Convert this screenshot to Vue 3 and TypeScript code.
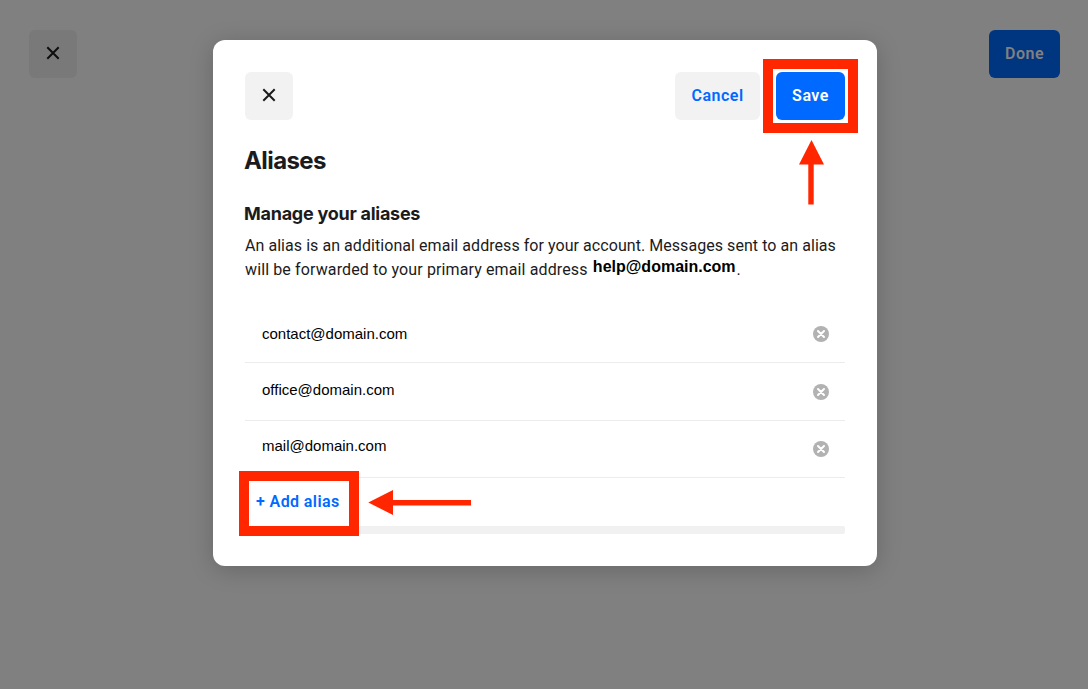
<script setup lang="ts">
import { ref } from 'vue';
import type { Ref } from 'vue';

interface Alias {
    name: string
    className: string
}

const aliases: Ref<Alias[]> = ref([
    { name: 'contact@domain.com', className: 'contact' },
    { name: 'office@domain.com', className: 'office' },
    { name: 'mail@domain.com', className: 'mail' }
])

const removeAlias = (index: number): void => {
    aliases.value.splice(index, 1)
}
</script>

<template>
    <div class="page">
        <div class="pageHeader">
            <button class="button square dimmed">
                <svg width="14" height="14" viewBox="0 0 14 14">
                    <path d="M1.3 1.3L12.7 12.7M12.7 1.3L1.3 12.7" />
                </svg>
            </button>
            <button class="button done"><span>Done</span></button>
        </div>

        <div class="modal">
            <div class="modalHeader">
                <button class="button square">
                    <svg width="14" height="14" viewBox="0 0 14 14">
                        <path d="M1.3 1.3L12.7 12.7M12.7 1.3L1.3 12.7" />
                    </svg>
                </button>
                <div class="actions">
                    <button class="button cancel"><span>Cancel</span></button>
                    <button class="button save"><span>Save</span></button>
                </div>
            </div>

            <h1>Aliases</h1>
            <h2>Manage your aliases</h2>
            <div class="description">
                <div class="first">An alias is an additional email address for your account. Messages sent to an alias</div>
                <div class="second">will be forwarded to your primary email address <b>help@domain.com</b>.</div>
            </div>

            <ul class="aliases">
                <li v-for="(alias, index) in aliases" :key="alias.name" :class="alias.className">
                    <span>{{ alias.name }}</span>
                    <button class="remove" @click="removeAlias(index)">
                        <svg width="16" height="16" viewBox="0 0 16 16">
                            <circle cx="8" cy="8" r="8" />
                            <path d="M5 5L11 11M11 5L5 11" />
                        </svg>
                    </button>
                </li>
            </ul>
            <div class="addRow">
                <button class="addAlias">+ Add alias</button>
            </div>
            <div class="bar"></div>

            <div class="mark markSave"></div>
            <div class="mark markAdd"></div>
            <svg class="arrow arrowUp" width="26" height="66" viewBox="0 0 26 66">
                <path d="M12.5 0L25 24.5H14.7V64.5H9.3V24.5H0Z" />
            </svg>
            <svg class="arrow arrowLeft" width="104" height="26" viewBox="0 0 104 26">
                <path d="M0.3 12.5L25 0V10H103V15.5H25V25Z" />
            </svg>
        </div>
    </div>
</template>

<style>
body{
    margin: 0;
    overflow: hidden;
}
</style>

<style scoped>
.page{
    height: 689px;
    box-sizing: border-box;
    padding-top: 30px;
    background-color: #808080;
    color: #1b1b1d;
    font-family: Roboto, "Liberation Sans", sans-serif;
    position: relative;
}

.pageHeader{
    display: flex;
    justify-content: space-between;
    padding: 0 28px 0 29px;
}

.button{
    height: 48px;
    border: none;
    border-radius: 6px;
    padding: 0 0 2px;
    font-family: inherit;
    font-size: 16px;
    font-weight: 600;
    letter-spacing: 0.5px;
    background-color: #f2f2f2;
    display: flex;
    align-items: center;
    justify-content: center;
    cursor: pointer;
}

.square{
    width: 48px;
}

.square path{
    stroke: #1b1b1d;
    stroke-width: 2;
    fill: none;
}

.dimmed{
    background-color: #797979;
}

.dimmed path{
    stroke: #0e0e0f;
}

.done{
    width: 71px;
    background-color: #003580;
    color: #808080;
}

.modal{
    position: absolute;
    top: 40px;
    left: 213px;
    width: 664px;
    height: 526px;
    box-sizing: border-box;
    padding: 32px;
    border-radius: 12px;
    background-color: #fff;
    box-shadow: 0 4px 24px rgba(0, 0, 0, 0.2);
}

.modalHeader{
    display: flex;
    justify-content: space-between;
}

.actions{
    display: flex;
    gap: 16px;
}

.cancel{
    width: 85px;
    color: #0069ff;
}

.save{
    width: 69px;
    background-color: #0069ff;
    color: #fff;
}

h1{
    margin: 25px 0 0 -1px;
    font-family: Inter, sans-serif;
    font-size: 24px;
    line-height: 32px;
    font-weight: 700;
    letter-spacing: -0.6px;
}

h2{
    margin: 25px 0 0 -1px;
    font-family: Inter, sans-serif;
    font-size: 18px;
    line-height: 24px;
    font-weight: 700;
    letter-spacing: -0.26px;
}

.description{
    margin-top: 8px;
    height: 71px;
    font-size: 16px;
    line-height: 24px;
    white-space: nowrap;
}

.first{
    letter-spacing: 0.055px;
}

.second{
    letter-spacing: 0.12px;
}

.description b{
    position: relative;
    top: -3px;
    margin: 0 1px 0 1.2px;
    color: #000;
    font-family: "Liberation Sans", sans-serif;
    font-size: 16px;
    line-height: 1;
    letter-spacing: 0;
}

.aliases{
    list-style: none;
    margin: 0;
    padding: 0;
}

.aliases li{
    height: 58px;
    box-sizing: border-box;
    border-bottom: 1px solid #ececec;
    padding: 0 16px 0 17px;
    display: flex;
    align-items: center;
    justify-content: space-between;
    color: #000;
    font-family: "Liberation Sans", sans-serif;
    font-size: 15px;
}

.aliases .office span{
    padding-bottom: 4px;
}

.aliases .mail{
    height: 57px;
}

.aliases .mail span{
    padding-bottom: 7px;
}

.remove{
    width: 16px;
    height: 16px;
    border: none;
    padding: 0;
    background: none;
    cursor: pointer;
}

.remove svg{
    display: block;
}

.remove circle{
    fill: #b2b2b2;
}

.remove path{
    stroke: #fff;
    stroke-width: 2;
    stroke-linecap: round;
}

.addRow{
    height: 48px;
    padding-left: 11px;
    display: flex;
    align-items: center;
}

.addAlias{
    border: none;
    padding: 0 0 2px;
    background: none;
    color: #0069ff;
    font-family: inherit;
    font-size: 16px;
    font-weight: 600;
    letter-spacing: 0.4px;
    cursor: pointer;
}

.bar{
    height: 8px;
    border-radius: 0 2px 2px 0;
    background-color: #f1f1f1;
}

.mark{
    position: absolute;
    box-sizing: border-box;
    border: 10px solid #ff2600;
}

.markSave{
    top: 19px;
    left: 550px;
    width: 95px;
    height: 74px;
}

.markAdd{
    top: 431px;
    left: 26px;
    width: 120px;
    height: 65px;
}

.arrow{
    position: absolute;
    fill: #ff2600;
}

.arrowUp{
    top: 100px;
    left: 586px;
}

.arrowLeft{
    top: 450px;
    left: 155px;
}
</style>
